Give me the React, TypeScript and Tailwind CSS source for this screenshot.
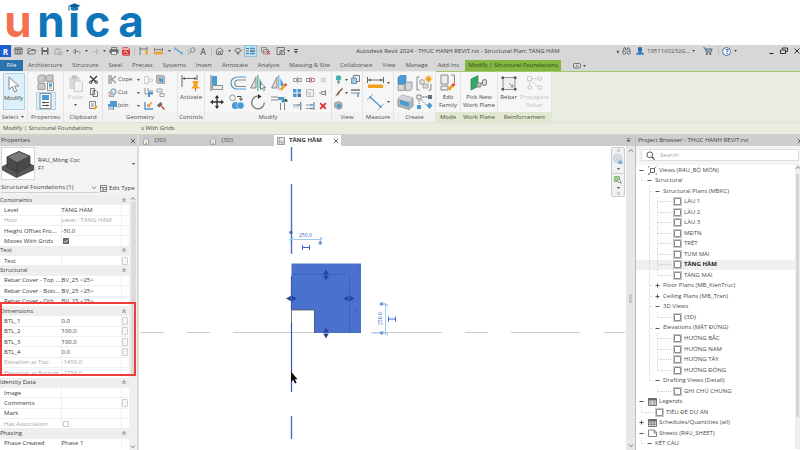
import React from 'react';

type IconProps = { w: number; h: number; children: React.ReactNode; className?: string };

const Icon = ({ w, h, children, className = '' }: IconProps) => (
  <svg width={w} height={h} viewBox={`0 0 ${w} ${h}`} fill="none" className={`block shrink-0 ${className}`} aria-hidden="true">
    {children}
  </svg>
);

const G = '#6a6a6a';
const B = '#4a9bd4';
const O = '#f2a21f';

const Caret = ({ className = '' }: { className?: string }) => (
  <Icon w={5} h={4} className={className}>
    <path d="M1 1h3L2.500 2.900z" fill="#4f4f4f" />
  </Icon>
);

/* ---------- Brand ---------- */

const Brand = () => (
  <header className="flex h-[45px] shrink-0 items-start bg-white pl-[2px]">
    <div className="flex text-center font-['Inter',sans-serif] text-[44px] leading-[42px] font-bold text-[#0e76b8]">
      <span className="w-[32px] text-[#f4704f]">u</span>
      <span className="w-[34px]">n</span>
      <span className="relative w-[11px]">
        i
        <span className="absolute top-0 left-1/2 flex h-[12px] w-[14px] -translate-x-1/2 items-end bg-white">
          <Icon w={14} h={8} className="overflow-visible">
            <path d="M1.500 1.800 7.500-.8 13.500 1.800 7.500 4.400z" fill="#0b5f9b" />
            <path d="M3.800 2.800v3c2.200 1.200 5.200 1.200 7.400 0v-3L7.500 4.400z" fill="#0e76b8" />
            <path d="M2 2v4.500" stroke="#0b5f9b" />
          </Icon>
        </span>
      </span>
      <span className="w-[37px]">c</span>
      <span className="w-[30px]">a</span>
    </div>
  </header>
);

/* ---------- Quick access toolbar ---------- */

type Tool = { name: string; w: string; icon: React.ReactNode; on?: boolean };

const arrow = (n: string, w: string): Tool => ({ name: n, w, icon: <Caret /> });

const tools: (Tool | 'sep')[] = [
  {
    name: 'Revit menu', w: 'w-[11px]',
    icon: (
      <span className="flex h-[12px] w-[11px] items-center justify-center bg-[#1b5fd0] text-[8px] font-bold text-white">R</span>
    ),
  },
  {
    name: 'Home', w: 'w-[14px]',
    icon: <Icon w={9} h={8}><path d="M1 1h7v6H1zM1 2.500h7M3.300 2.500V7M4.500 4.200h2.500M4.500 5.700h2.500" stroke="#5b6067" strokeWidth=".9" /></Icon>,
  },
  {
    name: 'Open', w: 'w-[14px]',
    icon: <Icon w={10} h={8}><path d="M1 7V1.500h2.500l1 1H7.500V3.500M1 7l2-3.500h6L7.500 7z" stroke="#666" strokeWidth=".8" /></Icon>,
  },
  {
    name: 'Save', w: 'w-[12px]',
    icon: <Icon w={8} h={8}><path d="M.5.500h7v7h-7z" fill="#63676c" /><path d="M2 .5h4v2.500H2z" fill="#e6e6e6" /><path d="M2 5h4v2.500H2z" fill="#d6d6d6" /></Icon>,
  },
  {
    name: 'Synchronize', w: 'w-[14px]',
    icon: <Icon w={9} h={8}><path d="M1 2.500h4v4.500H1zM2 2.500c0-2 5-2 5 0M5 5h3v2.500H5z" stroke="#a5a5a5" strokeWidth=".9" /></Icon>,
  },
  arrow('Synchronize options', 'w-[5px]'),
  { name: 'Undo', w: 'w-[13px]', icon: <Icon w={9} h={7}><path d="M1 3.500 3.500 1.200v4.600zM3.500 3.500H6c1 0 2 .5 2 2" stroke="#777" strokeWidth=".9" /></Icon> },
  arrow('Undo history', 'w-[6px]'),
  { name: 'Redo', w: 'w-[12px]', icon: <Icon w={9} h={7}><path d="M8 3.500 5.500 1.200v4.600zM5.500 3.500H3c-1 0-2 .5-2 2" stroke="#b2b2b2" strokeWidth=".9" /></Icon> },
  arrow('Redo history', 'w-[6px]'),
  {
    name: 'Print', w: 'w-[13px]',
    icon: <Icon w={10} h={8}><path d="M2.500.500h5v2h-5z" stroke="#666" strokeWidth=".8" /><path d="M.5 2.500h9v3.800h-9z" fill="#666a6f" /><path d="M2.500 4.500h5v3h-5z" fill="#eee" stroke="#666" strokeWidth=".7" /></Icon>,
  },
  {
    name: 'Export PDF', w: 'w-[12px]',
    icon: <Icon w={8} h={9}><path d="M1 .5h5l1.500 1.500v6.500H1z" fill="#f1b4b4" stroke="#b33" strokeWidth=".6" /><path d="M0 3h8v4.500H0z" fill="#d93636" /><path d="M1.500 5.500 4 4l1.500 2.500" stroke="#fff" strokeWidth=".7" /></Icon>,
  },
  'sep',
  { name: 'Measure', w: 'w-[14px]', icon: <Icon w={9} h={8}><path d="M1 0v8M8 0v3M1 2h7" stroke={G} strokeWidth=".9" /><path d="M6.500 3.500h2.500v4H6.500z" fill={O} /></Icon> },
  { name: 'Aligned ruler', w: 'w-[17px]', icon: <Icon w={9} h={7}><path d="M.5 0v3M8.500 0v3M.5 1.500h8" stroke={G} strokeWidth=".8" /><path d="M0 3.500h9v3H0z" fill="#e6a63c" /></Icon> },
  arrow('Measure options', 'w-[5px]'),
  { name: 'Aligned dimension', w: 'w-[13px]', icon: <Icon w={9} h={8}><path d="M1 1.500l7 5" stroke={B} strokeWidth="1.200" /><path d="M0 3l2-3M7 8l2-3" stroke={B} strokeWidth=".8" /></Icon> },
  { name: 'Tag by category', w: 'w-[12px]', icon: <Icon w={9} h={8}><circle cx="5.800" cy="3" r="2.300" stroke="#777" strokeWidth=".8" /><path d="M4.200 4.800 1 7.200M.5 3.500l1.500-1" stroke="#777" strokeWidth=".8" /></Icon> },
  { name: 'Text', w: 'w-[12px]', icon: <span className="text-[9px] text-[#444]">A</span> },
  'sep',
  { name: 'Default 3D view', w: 'w-[13px]', icon: <Icon w={9} h={8}><path d="M.5 4 4.500.7 8.500 4M1.700 3.500v4h5.600v-4M3.700 7.500V4.700h1.800v2.800" stroke={G} strokeWidth=".9" /></Icon> },
  arrow('3D view options', 'w-[6px]'),
  { name: 'Section', w: 'w-[12px]', icon: <Icon w={8} h={8}><circle cx="4" cy="3.500" r="2.300" stroke={G} strokeWidth=".9" /><path d="M0 3.500h1.500M6.500 3.500H8M3 6l1 1.700L5 6z" stroke={G} strokeWidth=".8" /></Icon> },
  { name: 'Thin lines', w: 'w-[13px]', on: true, icon: <Icon w={9} h={8}><path d="M0 1.500h3M0 4h3M0 6.500h3" stroke="#444" strokeWidth=".7" /><path d="M4 1.500h5M4 6.500h5" stroke="#3f93cf" strokeWidth="1.400" /><path d="M4 4h5" stroke="#333" /></Icon> },
  { name: 'Close inactive views', w: 'w-[17px]', icon: <Icon w={10} h={8}><path d="M.5.500h5v4.500h-5zM2.500 2.500h5v4.500h-5z" stroke="#888" strokeWidth=".9" /><path d="M6 4l2.800 3.500M8.800 4 6 7.500" stroke="#d33" /></Icon> },
  { name: 'Switch windows', w: 'w-[12px]', icon: <Icon w={9} h={8}><path d="M1 7.500V.5h7.500v3H4v4z" stroke={G} strokeWidth=".9" /><path d="M5 5h3.500v2.500H5z" stroke={G} strokeWidth=".9" /></Icon> },
  arrow('Window list', 'w-[5px]'),
  { name: 'Customize toolbar', w: 'w-[10px]', icon: <Icon w={6} h={5}><path d="M1 .5h4" stroke="#444" /><path d="M1 2h4L3 4.500z" fill="#444" /></Icon> },
];

const TitleBar = () => (
  <div className="flex h-[15px] shrink-0 items-center bg-[#d7d7d7] pb-[3px]">
    {tools.map((t, i) =>
      t === 'sep' ? (
        <span key={i} className="flex w-[4px] shrink-0 justify-center"><span className="h-[9px] w-px bg-[#bdbdbd]" /></span>
      ) : (
        <button
          key={i}
          aria-label={t.name}
          className={`flex h-[12px] shrink-0 items-center justify-center ${t.w} ${t.on ? 'bg-[#c2e0f3] outline outline-[#8fc3e6] -outline-offset-1' : ''}`}
        >
          {t.icon}
        </button>
      ),
    )}
    <h1 className="min-w-0 flex-1 truncate text-center text-[#3d3d3d]">
      Autodesk Revit 2024 - THUC HANH REVIT.rvt - Structural Plan: TẦNG HẦM
    </h1>
    <div className="flex w-[185px] shrink-0 items-center">
      <button aria-label="Collapse search" className="w-[7px]"><Icon w={4} h={5}><path d="M3.500 1v3.500L1.500 2.700z" fill="#333" /></Icon></button>
      <button aria-label="Search" className="w-[14px]">
        <Icon w={9} h={8}>
          <path d="M2 .8h1.500v2M5.500 2.800v-2H7M2 1 .800 5M7 1l1.200 4M3.500 2.800h2" stroke={G} strokeWidth=".9" />
          <circle cx="2.200" cy="5.700" r="1.600" stroke={G} strokeWidth=".9" /><circle cx="6.800" cy="5.700" r="1.600" stroke={G} strokeWidth=".9" />
        </Icon>
      </button>
      <button className="flex items-center text-[#555]">
        <Icon w={8} h={8} className="mr-[3px]"><path d="M2 .3h4v3.500L5 5H3L2 3.800z" fill="#2c66b8" /><path d="M.3 7.800V6L3 5h2l2.700 1v1.800z" fill="#3b7bd0" /></Icon>
        1951160232G...
        <Caret className="ml-[1px]" />
      </button>
      <button aria-label="App store" className="ml-[5px] flex w-[14px] justify-center">
        <Icon w={10} h={8}><path d="M.3.800h1.500l1.500 4.400h4.500L9.300 2H2.300" stroke="#4c5a6e" strokeWidth=".9" /><path d="M3 2.800h5.500M3.300 3.900h5" stroke="#4c7ec0" strokeWidth=".7" /><circle cx="3.800" cy="6.900" r=".9" fill="#444" /><circle cx="7.300" cy="6.900" r=".9" fill="#444" /></Icon>
      </button>
      <span className="mx-[3px] h-[10px] w-px bg-[#c2c2c2]" />
      <button aria-label="Help" className="flex items-center gap-[2px]">
        <span className="flex size-[9px] items-center justify-center rounded-full border border-[#3f6fae] bg-white text-[7px] leading-none font-bold text-[#2c66b8]">?</span>
        <Caret />
      </button>
      <span className="ml-auto flex items-center gap-[5px]">
        <button aria-label="Minimize"><Icon w={7} h={8}><path d="M1.500 6.500h4" stroke="#333" strokeWidth="1.200" /></Icon></button>
        <button aria-label="Restore"><Icon w={8} h={8}><path d="M2.500 2V1h5v3.500H6M.5 3h5v3.500h-5z" stroke="#333" /></Icon></button>
        <button aria-label="Close"><Icon w={7} h={8}><path d="M1.500 1.500l5 5M6.500 1.500l-5 5" stroke="#333" /></Icon></button>
      </span>
    </div>
  </div>
);

/* ---------- Ribbon tabs ---------- */

const tabs = [
  'Architecture', 'Structure', 'Steel', 'Precast', 'Systems', 'Insert', 'Annotate', 'Analyze',
  'Massing & Site', 'Collaborate', 'View', 'Manage', 'Add-Ins',
];

const TabBar = () => (
  <nav className="flex h-[11px] shrink-0 items-stretch bg-[#d7d7d7] text-[#505050]">
    <button className="w-[23px] bg-[#2b73ae] text-white">File</button>
    <div className="ml-[5px] flex gap-[10px]">
      {tabs.map((t) => (
        <button key={t} className="whitespace-nowrap">{t}</button>
      ))}
    </div>
    <button className="ml-[6px] w-[96px] bg-[#84b740] whitespace-nowrap text-[#33431d]">Modify | Structural Foundations</button>
    <button aria-label="Ribbon display" className="ml-[12px] flex items-center gap-[1px]">
      <Icon w={8} h={6}><rect x=".5" y=".5" width="7" height="4.500" rx="1" stroke={G} strokeWidth=".9" /><path d="M2.800 3.500h2.400L4 1.800z" fill={G} /></Icon>
      <Caret />
    </button>
  </nav>
);

/* ---------- Ribbon ---------- */

const Panel = ({ title, w, children, green = false, drop = false }: {
  title: string; w: string; children: React.ReactNode; green?: boolean; drop?: boolean;
}) => (
  <section className={`flex shrink-0 flex-col border-r border-[#e4e4e4] ${w} ${green ? 'border-t border-t-[#a3c66c]' : 'border-t border-t-[#ececec]'}`}>
    <div className="flex h-[40px] justify-center bg-[#f6f6f6] pt-px">{children}</div>
    <h2 className={`flex h-[10px] items-center justify-center gap-[2px] whitespace-nowrap text-[#4f4f4f] ${green ? 'bg-[#e0e8d0]' : 'bg-[#f2f2f2]'}`}>
      {title}
      {drop && <Caret />}
    </h2>
  </section>
);

const Small = ({ name, children }: { name: string; children: React.ReactNode }) => (
  <button aria-label={name} className="flex h-[13px] items-center justify-center">{children}</button>
);

const Big = ({ children, label, faded = false, className = '' }: {
  children: React.ReactNode; label: React.ReactNode; faded?: boolean; className?: string;
}) => (
  <button className={`flex flex-col items-center leading-[8px] ${faded ? 'text-[#c6c6c6]' : 'text-[#4a4a4a]'} ${className}`}>
    <span className="flex h-[20px] items-center">{children}</span>
    {label}
  </button>
);

const modifyBig: [string, React.ReactNode][] = [
  ['Align', <Icon w={14} h={16}><path d="M1 0v16" stroke={G} /><path d="M2 1h5v9H2z" fill={B} /><path d="M2.500 10.500h10v4h-10z" fill="#eee" stroke="#8b8f94" /></Icon>],
  ['Offset', <Icon w={17} h={16}><path d="M17 2H8a6 6 0 0 0 0 12h9" stroke={B} strokeWidth="1.200" /><path d="M17 5H9a3 3 0 0 0 0 6.500h8" stroke="#8a8a8a" strokeWidth="1.200" /></Icon>],
  ['Mirror', <Icon w={16} h={16}><path d="M6 2v11H.7z" fill="#ddd" stroke="#888" /><path d="M9.500 3v10h4.500z" fill={B} /><path d="M7.800 0v16" stroke="#4cba72" strokeWidth="1.200" /><path d="M10.500 8v6.500l1.700-1.500 1.500 2.500 1-.6-1.200-2.400h2z" fill="#fff" stroke="#555" strokeWidth=".7" /></Icon>],
  ['Mirror by axis', <Icon w={17} h={16}><path d="M6 2v11H.7z" fill="#ddd" stroke="#888" /><path d="M9.500 3v8h4z" fill={B} /><path d="M7.800 0v15" stroke="#5fa7d8" /><path d="M9.500 14.800l5-5" stroke={O} strokeWidth="2.600" /><path d="M14 10.300l1.500-1.500" stroke="#e5533c" strokeWidth="2.600" /></Icon>],
  ['Move', <Icon w={14} h={14}><path d="M7 1v12M1 7h12" stroke="#333" strokeWidth="1.400" /><path d="M7 0l2.200 3H4.800zM7 14l2.200-3H4.800zM0 7l3-2.200v4.400zM14 7l-3-2.200v4.400z" fill="#333" /></Icon>],
  ['Copy', <Icon w={16} h={16}><circle cx="3.500" cy="3.800" r="2.800" stroke="#999" /><path d="M8 2.500h4v3.500M10.500 4.500L12 6.500l1.500-2" stroke="#444" /><circle cx="6.500" cy="11.500" r="3.600" fill={B} /><circle cx="11.500" cy="11.500" r="3.600" fill={B} stroke="#fff" strokeWidth=".5" /></Icon>],
  ['Rotate', <Icon w={16} h={16}><path d="M9 2.300A6.300 6.300 0 1 0 14.300 8.500" stroke="#777" strokeWidth="1.300" /><path d="M8 0l3.500 2.500L8 5z" fill="#333" /></Icon>],
  ['Trim', <Icon w={17} h={16}><path d="M0 3h7M0 6h7" stroke="#888" /><path d="M7 4.500h5v4" stroke={B} strokeWidth="3" /><path d="M9.500 16V9M13.500 16V9" stroke="#888" /><path d="M12.500 7.500l2.500-3 2 3z" fill="#333" /></Icon>],
];

const modifySmall: [string, React.ReactNode][] = [
  ['Split', <Icon w={9} h={6}><path d="M.5 1.500h3v3h-3zM5.500 1.500h3v3h-3z" stroke="#888" strokeWidth=".8" /><path d="M4.500 0v6" stroke="#d66" strokeWidth=".8" /></Icon>],
  ['Split with gap', <Icon w={9} h={6}><path d="M.5 1.500h3v3h-3zM5.500 1.500h3v3h-3z" stroke="#777" strokeWidth=".8" /><path d="M4 0v6M5 0v6" stroke="#d55" strokeWidth=".6" /></Icon>],
  ['Unpin', <Icon w={8} h={8}><path d="M1 4h2M3 2v4M3 2.500h3v3H3M6 1v6" stroke="#ccc" /></Icon>],
  ['Array', <Icon w={8} h={8}><path d="M0 0h3.500v3.500H0zM4.500 0H8v3.500H4.500zM0 4.500h3.500V8H0z" fill={B} /><path d="M4.500 4.500H8V8H4.500z" fill="#5c7486" /></Icon>],
  ['Scale', <Icon w={8} h={8}><path d="M.5.500h7v7h-7z" fill="#eee" stroke="#bbb" /><path d="M.5 4h3.500v3.500" stroke="#bbb" /></Icon>],
  ['Pin', <Icon w={8} h={8}><path d="M0 4h3M3 2v4M3 2.500h3v3H3M6.500 1v6" stroke="#888" strokeWidth=".9" /></Icon>],
  ['Trim single', <Icon w={9} h={8}><path d="M0 3h4" stroke="#888" /><path d="M4 3h3" stroke={B} strokeWidth="1.400" /><path d="M7.800 0v8" stroke="#666" /><path d="M0 5h6" stroke="#aaa" strokeWidth=".7" /></Icon>],
  ['Trim multiple', <Icon w={9} h={8}><path d="M0 3h5M0 6.500h5" stroke="#999" strokeWidth="1.200" /><path d="M4 3h3M4 6.500h3" stroke={B} strokeWidth="1.400" /><path d="M8 0v8" stroke="#666" /></Icon>],
  ['Delete', <Icon w={8} h={8}><path d="M1.200 1.200l5.600 5.600M6.800 1.200 1.200 6.800" stroke="#e02c2c" strokeWidth="1.700" /></Icon>],
];

const Ribbon = () => (
  <div className="flex h-[51px] shrink-0 items-stretch bg-[#e9eddf]">
    <Panel title="Select" w="w-[28px]" drop>
      <Big label="Modify" className="h-[37px] w-[22px] border border-[#a9d3ec] bg-[#dceffa]">
        <Icon w={12} h={17}><path d="M1 1v12.500l3.300-2.800L6.600 16l2.200-1-2.300-5h4.300z" fill="#fff" stroke="#888" /></Icon>
      </Big>
    </Panel>
    <Panel title="Properties" w="w-[36px]">
      <div className="flex flex-col items-center gap-px">
        <button aria-label="Family types" className="flex h-[18px] items-center">
          <Icon w={18} h={17}>
            <path d="M1 2.500 2.500 1H8v6L7 8H1zM9 2.500 10.500 1H16v6H9zM1 9.500h7v6H1z" fill="#c9cbce" stroke="#8c9095" strokeWidth=".8" />
            <path d="M10.500 8h6v8.500h-6z" fill="#fff" stroke="#777" strokeWidth=".8" /><path d="M12 9.500h3v3h-3z" fill={B} /><path d="M12 14h3" stroke="#777" strokeWidth=".8" />
          </Icon>
        </button>
        <button aria-label="Properties palette" className="flex h-[18px] w-[20px] items-center justify-center border border-[#a9d3ec] bg-[#dceffa]">
          <Icon w={13} h={16}>
            <path d="M1 .5h11v15H1z" fill="#fff" stroke="#888" /><path d="M3 2h7v5H3z" fill={B} /><path d="M3 9.500h7M3 12.500h7M5 8.500v2M8 11.500v2" stroke="#555" />
          </Icon>
        </button>
      </div>
    </Panel>
    <Panel title="Clipboard" w="w-[39px]">
      <Big label={<>Paste<Caret className="mt-[2px]" /></>} faded className="mr-[6px]">
        <Icon w={14} h={17}><path d="M.5 2h10v12H.5z" fill="#d8d8d8" /><path d="M3 .5h5v3H3z" fill="#bdbdbd" /><path d="M5.500 6h6l2 2v8.500h-8z" fill="#f4f4f4" stroke="#c8c8c8" /></Icon>
      </Big>
      <div className="flex flex-col">
        <Small name="Cut"><Icon w={9} h={9}><path d="M1 1l5.500 5.500M8 1 2.500 6.500" stroke="#333" strokeWidth="1.300" /><circle cx="1.800" cy="7.200" r="1.200" stroke="#333" /><circle cx="7.200" cy="7.200" r="1.200" stroke="#333" /></Icon></Small>
        <Small name="Copy to clipboard"><Icon w={8} h={9}><path d="M.5.500h4v6h-4zM3 2.500h3l1.500 1.500v4.500H3z" fill="#f6f6f6" stroke={G} strokeWidth=".9" /></Icon></Small>
        <Small name="Match type"><Icon w={9} h={9}><path d="M.5.500h6v7h-6zM2 3h3M2 5h3" stroke="#777" strokeWidth=".9" /><path d="M5 8l3-3" stroke={O} strokeWidth="2" /></Icon></Small>
      </div>
    </Panel>
    <Panel title="Geometry" w="w-[75px]">
      <div className="grid w-full grid-cols-[12px_16px_8px_12px_13px] content-start pl-[3px] text-left text-[#4a4a4a]">
        <Small name="Cope icon"><Icon w={9} h={9}><path d="M1 0v9M3 0v9M8 1 4 4.500 8 8" stroke="#8b8f94" strokeWidth="1.200" /></Icon></Small>
        <button className="text-left">Cope</button>
        <Small name="Cope options"><Caret /></Small>
        <Small name="Notch"><Icon w={9} h={8}><path d="M.5.500h4v7h-4zM4.500 3H8.500v2.500h-4" stroke="#ccc" /></Icon></Small>
        <Small name="Split face"><Icon w={9} h={9}><path d="M.5.500h7l1 1v7h-7l-1-1z" fill="#b9bcc0" stroke="#888" strokeWidth=".6" /><path d="M3 3l4 1v3.500L3 6z" fill={B} /></Icon></Small>
        <Small name="Cut geometry"><Icon w={9} h={9}><path d="M1 4h5v4.500H1z" fill="#ddd" stroke="#999" strokeWidth=".8" /><circle cx="5.500" cy="3.500" r="2.700" stroke="#7a90a3" fill="#cfe4f2" /><path d="M3.500 6l-2 2" stroke="#e77" /></Icon></Small>
        <button className="text-left">Cut</button>
        <Small name="Cut options"><Caret /></Small>
        <Small name="Wall joins"><Icon w={9} h={9}><path d="M1 0v6h8M4 0v3h5" stroke="#888" strokeWidth=".9" /><path d="M4 4h5v2H6v3H4z" fill={B} /></Icon></Small>
        <Small name="Beam joins"><Icon w={9} h={9}><path d="M1 1h5v3H1zM4 5.500h4v3H4z" stroke="#999" strokeWidth=".9" /></Icon></Small>
        <Small name="Join geometry"><Icon w={9} h={9}><path d="M2 0h7v6H6v3H0V3h2z" fill={B} /><path d="M0 5.500h5V9H0z" fill="#c5c9cd" /></Icon></Small>
        <button className="text-left">Join</button>
        <Small name="Join options"><Caret /></Small>
        <Small name="Paint"><Icon w={9} h={9}><path d="M1 1v7h8" stroke={B} strokeWidth="1.400" /><path d="M3.500 6 7.500 1.500" stroke={O} strokeWidth="1.800" /><path d="M3 3l3 3" stroke="#e66" /></Icon></Small>
        <Small name="Demolish"><Icon w={9} h={9}><path d="M1 4.500 4.500 1l2 2L3 6.500z" fill="#666" /><path d="M4.500 4l4 4.500" stroke="#b5523a" strokeWidth="1.400" /></Icon></Small>
      </div>
    </Panel>
    <Panel title="Controls" w="w-[27px]">
      <Big label="Activate">
        <Icon w={19} h={16}><path d="M1 0v12M16 0v5M1.500 3.500h14" stroke={G} /><path d="M1 3.500l3-1.500v3zM16 3.500l-3-1.500v3z" fill={G} /><path d="M11.500 6h6v1.500l-1 .5v3l2 1.500v1h-8v-1l2-1.500V8l-1-.5z" fill={O} /><path d="M14.500 13v3" stroke="#a66" /></Icon>
      </Big>
    </Panel>
    <Panel title="Modify" w="w-[127px]">
      <div className="grid grid-cols-[20px_21px_21px_21px] grid-rows-[19px_19px] items-center justify-items-center">
        {modifyBig.map(([n, i]) => <button key={n} aria-label={n}>{i}</button>)}
      </div>
      <div className="ml-[1px] grid grid-cols-[13px_13px_13px] content-start">
        {modifySmall.map(([n, i]) => <Small key={n} name={n}>{i}</Small>)}
      </div>
    </Panel>
    <Panel title="View" w="w-[31px]">
      <div className="grid grid-cols-[10px_7px_11px] content-start">
        <Small name="Hide in view"><Icon w={7} h={9}><circle cx="3.500" cy="3" r="2.700" fill="#3fb5ad" /><path d="M2.500 6h2v2.500h-2z" fill="#777" /></Icon></Small>
        <Small name="Hide options"><Caret /></Small>
        <Small name="Displace"><Icon w={9} h={9}><path d="M2.500.500h6v6h-6z" stroke="#778" /><path d="M.5 3h5v5.500h-5z" fill="#9cc9e6" stroke="#5c86a3" strokeWidth=".8" /></Icon></Small>
        <Small name="Override graphics"><Icon w={9} h={9}><path d="M8.500.500 4 5" stroke="#8a5a30" strokeWidth="1.500" /><path d="M4.500 4 1 8.500 5.500 6z" fill="#555" /></Icon></Small>
        <Small name="Override options"><Caret /></Small>
        <Small name="Linework"><Icon w={9} h={8}><path d="M0 1h9" stroke="#777" strokeWidth="1.500" /><path d="M0 4h9" stroke="#888" /><path d="M7 4v4" stroke={B} strokeWidth="1.500" /></Icon></Small>
        <Small name="Selection box"><Icon w={9} h={9}><path d="M.5 2 4 .5l4 1.500v5L5 8.500l-4.500-2z" fill="#aeb2b6" stroke="#888" strokeWidth=".6" /><circle cx="5" cy="5" r="2" fill={B} /></Icon></Small>
      </div>
    </Panel>
    <Panel title="Measure" w="w-[31px]">
      <div className="grid grid-cols-[20px_6px] grid-rows-[19px_19px] items-center justify-items-center">
        <button aria-label="Measure between"><Icon w={17} h={12}><path d="M.5 0v6M16.500 0v6M1 3h15" stroke={G} /><path d="M1 3l3-1.500v3zM16 3l-3-1.500v3z" fill={G} /><path d="M1 7.500h15v3.500H1z" fill={O} /></Icon></button>
        <button aria-label="Measure options"><Caret /></button>
        <button aria-label="Dimension"><Icon w={17} h={16}><path d="M3 3l11 10" stroke={B} strokeWidth="1.300" /><path d="M0 6l6-6M11 16l6-6" stroke="#999" strokeWidth=".8" /><path d="M2 2l3 1-2 2zM15 14l-3-1 2-2z" fill={B} /></Icon></button>
        <button aria-label="Dimension options"><Caret /></button>
      </div>
    </Panel>
    <Panel title="Create" w="w-[42px]">
      <div className="grid grid-cols-[19px_19px] grid-rows-[19px_19px] items-center justify-items-center">
        <button aria-label="Create assembly"><Icon w={16} h={16}><path d="M1 2.500 3 .5h6v7L7.500 9H1z" fill={B} stroke="#33749f" strokeWidth=".6" /><path d="M1 9.500h6.500v6H1zM8.500 9l2-2H15v7l-1.500 1.500h-5z" fill="#d4d6d9" stroke="#8c9095" strokeWidth=".8" /></Icon></button>
        <button aria-label="Create group"><Icon w={17} h={16}><path d="M3.500 2H1v13h2.500M12.500 15H15V9" stroke="#888" /><circle cx="6" cy="7" r="2.500" fill="#ddd" stroke="#999" strokeWidth=".8" /><path d="M7 9h5v4H7z" fill="#ddd" stroke="#999" strokeWidth=".8" /><circle cx="12.500" cy="4" r="2.400" fill={O} /><path d="M12.500 0v8M8.500 4h8M9.800 1.300l5.400 5.400M15.200 1.300 9.800 6.700" stroke={O} strokeWidth=".9" /></Icon></button>
        <button aria-label="Create parts"><Icon w={17} h={16}><path d="M1 4.500 5 1l11 3v8l-4 3.500L1 12z" fill="#b4b8bc" stroke="#85898e" strokeWidth=".8" /><path d="M1 4.500 5 1l11 3-4 3.500z" fill="#d3d5d8" /><path d="M3 6l9 2.500V13L3 10.500z" fill={B} /></Icon></button>
        <button aria-label="Create similar"><Icon w={17} h={16}><path d="M1 1h4v4H1z" stroke="#777" strokeWidth=".9" /><path d="M6.500 3h5" stroke="#444" strokeDasharray="2 1" /><path d="M12 1h4v4h-4z" fill="#66707a" /><path d="M3 6v4M5 5.500l6 6" stroke="#777" strokeWidth=".9" strokeDasharray="2 1" /><path d="M1 11h4v4H1z" fill={B} /><path d="M13.500 8.500l3 3-3 3.500-3-3.500z" fill={B} /></Icon></button>
      </div>
    </Panel>
    <Panel title="Mode" w="w-[25px]" green>
      <Big label={<>Edit<br />Family</>}>
        <Icon w={18} h={18}><path d="M2 1h7v9H2zM12 1h3.500v8M2 12h7v4H2z" fill="#eee" stroke="#888" /><path d="M9.500 15.800l4.500-4.500" stroke={O} strokeWidth="2.800" /><path d="M13.500 11.800l2-2" stroke="#e5443c" strokeWidth="2.800" /></Icon>
      </Big>
    </Panel>
    <Panel title="Work Plane" w="w-[37px]" green>
      <Big label={<>Pick New<br />Work Plane</>}>
        <Icon w={18} h={18}><path d="M1 5l7-3.500v11L1 16z" fill="#34a864" stroke="#238450" strokeWidth=".7" /><circle cx="9" cy="11" r="2.300" fill="#bbb" stroke="#777" strokeWidth=".7" /><path d="M10 9.500l3-1" stroke="#777" /><rect x="12.500" y="5.500" width="4" height="6" rx="1.800" fill="#ddd" stroke="#777" /></Icon>
      </Big>
    </Panel>
    <Panel title="Reinforcement" w="w-[54px]" green>
      <Big label="Rebar" className="mr-[3px]">
        <Icon w={16} h={17}><path d="M2 2.500h12v12H2z" fill="#eee" stroke="#888" strokeWidth=".9" /><path d="M.5 1.500h2.500v2.500H.5zM13 1.500h2.500v2.500H13zM.5 13h2.500v2.500H.5zM13 13h2.500v2.500H13z" fill="#555" /><path d="M8 8l4 4M9.500 12H12V9.500" stroke="#777" strokeWidth=".8" /></Icon>
      </Big>
      <Big faded label={<>Propagate<br />Rebar</>}>
        <Icon w={17} h={16}><path d="M1.500 1.500h4v4h-4zM12 2h3.500v3H12zM2 11h3.500v3H2zM12 11h3.500v3H12z" stroke="#ccc" /><path d="M6 3.500h5M3.500 6v4M5.500 6l6 5" stroke="#ccc" /></Icon>
      </Big>
    </Panel>
    <div className="flex-1 border-t border-[#a3c66c]" />
  </div>
);

/* ---------- Properties palette ---------- */

type Row = { k: string; v?: string; dim?: boolean; btn?: boolean; check?: boolean; checked?: boolean };

const sections: { name: string; rows: Row[] }[] = [
  {
    name: 'Constraints',
    rows: [
      { k: 'Level', v: 'TẦNG HẦM' },
      { k: 'Host', v: 'Level : TẦNG HẦM', dim: true },
      { k: 'Height Offset Fro...', v: '-50.0' },
      { k: 'Moves With Grids', check: true, checked: true },
    ],
  },
  { name: 'Text', rows: [{ k: 'Text', btn: true }] },
  {
    name: 'Structural',
    rows: [
      { k: 'Rebar Cover - Top ...', v: 'BV_25 <25>' },
      { k: 'Rebar Cover - Bott...', v: 'BV_25 <25>' },
      { k: 'Rebar Cover - Oth...', v: 'BV_25 <25>' },
    ],
  },
  {
    name: 'Dimensions',
    rows: [
      { k: 'BTL_1', v: '0.0', btn: true },
      { k: 'BTL_2', v: '100.0', btn: true },
      { k: 'BTL_3', v: '100.0', btn: true },
      { k: 'BTL_4', v: '0.0', btn: true },
      { k: 'Elevation at Top', v: '-1450.0', dim: true },
      { k: 'Elevation at Bottom', v: '-2750.0', dim: true },
    ],
  },
  {
    name: 'Identity Data',
    rows: [
      { k: 'Image' },
      { k: 'Comments', btn: true },
      { k: 'Mark' },
      { k: 'Has Association', check: true, dim: true },
    ],
  },
  { name: 'Phasing', rows: [{ k: 'Phase Created', v: 'Phase 1' }] },
];

const ChevronUp = () => <Icon w={6} h={5}><path d="M1 3.800 3 1.500l2 2.300" stroke="#777" strokeWidth=".9" /></Icon>;
const ChevronDown = () => <Icon w={6} h={5}><path d="M1 1.500l2 2.300 2-2.300" stroke="#777" strokeWidth=".9" /></Icon>;
const Cross = () => <Icon w={6} h={6}><path d="M.8.800l4.400 4.400M5.200.800.800 5.200" stroke="#555" strokeWidth=".9" /></Icon>;

const Properties = () => (
  <aside className="flex w-[139px] shrink-0 flex-col border-r-2 border-[#dcdcdc] bg-[#f3f3f3] text-[#3c3c3c]">
    <div className="flex h-[11px] shrink-0 items-center justify-between bg-[#cfcfcf] pr-px pl-px">
      <h2>Properties</h2>
      <button aria-label="Close properties"><Cross /></button>
    </div>
    <div className="flex h-[35px] shrink-0 items-center pl-px">
      <span className="flex h-[33px] w-[34px] items-center justify-center border border-[#d5d5d5] bg-white">
        <Icon w={32} h={28}>
          <path d="M.5 16.500 15 9.500l16.500 6v4.500L14.500 27.500.5 20z" fill="#58585a" stroke="#2f2f2f" strokeWidth=".7" />
          <path d="M5 7 17 1.500l11 4.800v9.500L15 22.500 5 17z" fill="#4a4a4c" stroke="#2f2f2f" strokeWidth=".7" />
          <path d="M5 7 17 1.500l11 4.800L15 12.500z" fill="#7b7b7d" stroke="#3a3a3a" strokeWidth=".7" />
          <path d="M15 12.500v14.500" stroke="#333" strokeWidth=".7" />
        </Icon>
      </span>
      <div className="ml-[3px] flex-1 leading-[8px]">
        <p>R4U_Móng Cọc</p>
        <p>F1</p>
      </div>
      <button aria-label="Type selector" className="mr-px"><Caret /></button>
    </div>
    <div className="flex h-[14px] shrink-0 items-center pl-px">
      <button className="flex w-[98px] items-center justify-between border-b border-[#d0d0d0] pr-[2px] whitespace-nowrap">
        Structural Foundations (1)
        <ChevronDown />
      </button>
      <button className="ml-px flex items-center gap-[2px] whitespace-nowrap">
        <Icon w={7} h={7}><path d="M.5.500h6v6h-6zM.5 2.500h6M3 2.500v4M3 4.500h3.500" stroke="#666" strokeWidth=".8" /></Icon>
        Edit Type
      </button>
    </div>
    <div className="flex min-h-0 flex-1 bg-white">
      <div className="relative min-w-0 flex-1 pb-[2px]">
        <table className="h-full w-full table-fixed border-collapse text-left leading-[8px]">
          <colgroup><col className="w-[61px]" /><col /><col className="w-[8px]" /></colgroup>
          {sections.map((s) => (
            <tbody key={s.name}>
              <tr className="bg-[#eeeeee]">
                <th colSpan={2} scope="rowgroup" className="p-0 font-normal">{s.name}</th>
                <td className="p-0"><button aria-label={`Collapse ${s.name}`} className="block"><Icon w={6} h={6}><path d="M1.500 3 3 1.500 4.500 3M1.500 4.800 3 3.300l1.500 1.500" stroke="#555" strokeWidth=".8" /></Icon></button></td>
              </tr>
              {s.rows.map((r) => (
                <tr key={r.k} className={`border-t border-[#f0f0f0] ${r.dim ? 'text-[#a6a6a6]' : ''}`}>
                  <th scope="row" className="overflow-hidden py-0 pr-0 pl-[4px] font-normal whitespace-nowrap">{r.k}</th>
                  <td className="border-x border-[#f0f0f0] p-0 whitespace-nowrap">
                    {r.check ? (
                      <span className="relative ml-px block size-[6px]">
                        <input
                          type="checkbox"
                          aria-label={r.k}
                          defaultChecked={r.checked}
                          disabled={r.dim}
                          className="peer block size-[6px] appearance-none border border-[#666] checked:bg-[#666] disabled:border-[#ccc]"
                        />
                        <span className="pointer-events-none absolute inset-0 hidden peer-checked:block">
                          <Icon w={6} h={6}><path d="M1.300 3l1.300 1.300 2.200-2.600" stroke="#fff" strokeWidth=".9" /></Icon>
                        </span>
                      </span>
                    ) : r.v}
                  </td>
                  <td className="p-0">{r.btn && <button aria-label={`Associate ${r.k}`} className="block h-[8px] w-[6px] rounded-[1px] border border-[#cfcfcf] bg-[#f7f7f7]" />}</td>
                </tr>
              ))}
            </tbody>
          ))}
        </table>
        <div className="pointer-events-none absolute top-[107px] left-0 h-[74px] w-[136px] border-2 border-[#f23b3b]" />
      </div>
      <div className="flex w-[8px] shrink-0 flex-col items-center justify-between bg-[#efefef] py-px">
        <ChevronUp />
        <span className="mb-[70px] w-[5px] flex-1 bg-[#dcdcdc]" />
        <ChevronDown />
      </div>
    </div>
  </aside>
);

/* ---------- Drawing area ---------- */

const HouseIcon = () => (
  <Icon w={8} h={8}><path d="M.5 4 4 .8 7.500 4M1.500 3.500v4h5v-4" fill="#eee" stroke="#999" strokeWidth=".8" /><path d="M3.500 5h1.500v2.500H3.500z" fill="#d9a866" /></Icon>
);

const Handle = ({ x, y, r = 0 }: { x: number; y: number; r?: number }) => (
  <g transform={`translate(${x} ${y}) rotate(${r})`} fill="#24479b"><path d="M-2.800-.6h5.600L0-5.500zM-2.800.6h5.600L0 5.500z" /></g>
);

const Canvas = () => (
  <main className="flex min-w-0 flex-1 flex-col">
    <div className="flex h-[11px] shrink-0 items-stretch bg-[#cbcbcb] text-[#555]">
      <button className="flex w-[67px] items-center gap-[4px] pl-[3px]"><HouseIcon />{'{3D}'}</button>
      <button className="flex w-[68px] items-center gap-[4px] pl-[3px]"><HouseIcon />{'{3D}'}</button>
      <div className="flex w-[67px] items-center bg-white pr-[2px] pl-[3px] font-bold text-[#333]">
        <button className="flex flex-1 items-center gap-[4px]">
          <Icon w={8} h={8}><path d="M.5.500h7v7h-7z" fill="#e4e4e4" stroke="#888" strokeWidth=".8" /><path d="M2.500.500v7M.5 5h7M5 5v2.500" stroke="#999" strokeWidth=".7" /></Icon>
          TẦNG HẦM
        </button>
        <button aria-label="Close view"><Cross /></button>
      </div>
      <button aria-label="View list" className="mr-[4px] ml-auto flex items-center"><Icon w={5} h={5}><path d="M.5.500h4M1 2h3L2.500 4z" fill="#555" stroke="#555" strokeWidth=".5" /></Icon></button>
    </div>
    <div className="flex min-h-0 flex-1">
      <div className="relative min-w-0 flex-1 overflow-hidden bg-white">
        <svg width="486" height="304" viewBox="139 146 486 304" className="block" fill="none">
          <path d="M140 332.500h24M187 332.500h23M233 332.500h81M372 332.500h70M465 332.500h23M511 332.500h69M604 332.500h21" stroke="#cacaca" />
          <path d="M291.500 147v14M291.500 184v70M291.500 416v23" stroke="#4a6fca" strokeWidth="1.400" />
          <path d="M291.500 263.500h69.500v69.500h-47v-23h-22.500z" fill="#4a72cd" />
          <path d="M291.500 310h23v23M291.500 310v13" stroke="#555" strokeWidth=".8" />
          <path d="M291.500 276v34M291.500 323v69" stroke="#3558b8" strokeWidth="1.200" />
          <path d="M291.500 274.500h55M349.500 275v58" stroke="#3a60bd" strokeWidth=".8" />
          <path d="M358 266l3 3M354 309.500l3 2" stroke="#2f55b0" strokeWidth=".8" />
          <Handle x={326} y={275} /><Handle x={326} y={333} />
          <Handle x={291.500} y={298.500} r={90} /><Handle x={349} y={298.500} r={90} />
          <path d="M289 239.500h33M289.500 242l4-5M319 242l4-5M320.500 237v6" stroke="#9cc4ee" strokeWidth=".9" />
          <circle cx="291" cy="232.500" r="1.800" fill="#4f78b8" /><circle cx="320.300" cy="243" r="1.800" fill="#6f97cc" />
          <text x="299" y="237" className="fill-[#3a62c8] text-[5px]">250.0</text>
          <path d="M302.500 245v5M309.500 245v5M303 247.500h6" stroke="#3a62c8" />
          <path d="M385.500 303v32M380 304.500h8M371 333h17M383 302l5 5M383 331l5 5" stroke="#9cc4ee" strokeWidth=".9" />
          <circle cx="381.500" cy="304" r="1.800" fill="#6f97cc" /><circle cx="381.500" cy="333" r="1.800" fill="#6f97cc" />
          <text transform="translate(382 325) rotate(-90)" className="fill-[#3a62c8] text-[5px]">250.0</text>
          <path d="M388.500 316.500v5M395.500 316.500v5M389 319h6" stroke="#3a62c8" />
          <path d="M291 371.500v10.500l2.200-2 1.800 3.500 1.600-.8-1.700-3.400h2.600z" fill="#111" />
        </svg>
        <div className="absolute top-px right-px flex h-[50px] w-[14px] flex-col items-center justify-between rounded-[2px] border border-[#c9c9c9] bg-[#f1f1f1] py-px">
          <span className="size-[3px] rounded-full border border-[#aaa]" />
          <button aria-label="Steering wheel"><Icon w={10} h={11}><circle cx="4.500" cy="4.500" r="3.800" fill="#e6edf2" stroke="#9fb0bd" strokeWidth=".8" /><circle cx="4.500" cy="4.500" r="1.500" stroke="#9fb0bd" strokeWidth=".7" /><path d="M5 6.500h4.500V10H5z" fill="#85b6dc" /></Icon></button>
          <Caret />
          <span className="h-px w-full bg-[#cfcfcf]" />
          <button aria-label="Zoom region"><Icon w={8} h={8}><path d="M.5.500h5v5h-5z" fill="#9ccf85" stroke="#78a865" strokeWidth=".7" /><circle cx="5" cy="5" r="1.500" fill="#fff" stroke="#777" strokeWidth=".7" /><path d="M6 6l1.700 1.700" stroke="#777" /></Icon></button>
          <Caret />
          <span className="size-[3px] rounded-full border border-[#aaa]" />
        </div>
      </div>
      <div className="flex w-[9px] shrink-0 flex-col items-center justify-between bg-[#e7e7e7] py-[2px]">
        <ChevronUp />
        <span className="h-[9px] w-[3px] bg-[#c8c8c8]" />
        <ChevronDown />
      </div>
    </div>
  </main>
);

/* ---------- Project browser ---------- */

type Cell = ' ' | '|' | '-' | '+' | 'L' | 'T';
type Node = { c: Cell[]; t: string; icon?: 'views' | 'legend' | 'table' | 'sheet' | 'leaf'; on?: boolean };

const leaf = (t: string, last = false, on = false, mid: Cell = '|'): Node => ({ c: [' ', mid, last ? 'L' : 'T'], t, icon: 'leaf', on });

const nodes: Node[] = [
  { c: ['-'], t: 'Views (R4U_BỘ MÔN)', icon: 'views' },
  { c: ['L', '-'], t: 'Structural' },
  { c: [' ', 'T', '-'], t: 'Structural Plans (MBKC)' },
  leaf('LẦU 1'), leaf('LẦU 2'), leaf('LẦU 3'), leaf('MĐTN'), leaf('TRỆT'), leaf('TUM MÁI'),
  leaf('TẦNG HẦM', false, true), leaf('TẦNG MÁI', true),
  { c: [' ', 'T', '+'], t: 'Floor Plans (MB_KienTruc)' },
  { c: [' ', 'T', '+'], t: 'Ceiling Plans (MB_Tran)' },
  { c: [' ', 'T', '-'], t: '3D Views' },
  leaf('{3D}', true),
  { c: [' ', 'T', '-'], t: 'Elevations (MẶT ĐỨNG)' },
  leaf('HƯỚNG BẮC'), leaf('HƯỚNG NAM'), leaf('HƯỚNG TÂY'), leaf('HƯỚNG ĐÔNG', true),
  { c: [' ', 'L', '-'], t: 'Drafting Views (Detail)' },
  leaf('GHI CHÚ CHUNG', true, false, ' '),
  { c: ['-'], t: 'Legends', icon: 'legend' },
  { c: ['L'], t: 'TIÊU ĐỀ DỰ ÁN', icon: 'leaf' },
  { c: ['+'], t: 'Schedules/Quantities (all)', icon: 'table' },
  { c: ['-'], t: 'Sheets (R4U_SHEET)', icon: 'sheet' },
  { c: ['L', '-'], t: 'KẾT CẤU' },
];

const TreeCell = ({ c }: { c: Cell }) => (
  <Icon w={8} h={11}>
    {(c === '|' || c === 'T') && <path d="M4.500 0v11" stroke="#c4c4c4" strokeWidth=".7" strokeDasharray="1 1" />}
    {c === 'L' && <path d="M4.500 0v5.500" stroke="#c4c4c4" strokeWidth=".7" strokeDasharray="1 1" />}
    {(c === 'L' || c === 'T') && <path d="M4.500 5.500H8" stroke="#c4c4c4" strokeWidth=".7" strokeDasharray="1 1" />}
    {(c === '-' || c === '+') && <path d="M2.500 5.500h4" stroke="#555" />}
    {c === '+' && <path d="M4.500 3.500v4" stroke="#555" />}
  </Icon>
);

const nodeIcons = {
  views: <Icon w={9} h={9}><path d="M2.500 2.500h4v4h-4z" stroke="#666" /><path d="M0 2V0h2M9 7v2H7M2 9H0V7M6 3l2.500-2.500M.5 8.500 3 6" stroke="#666" strokeWidth=".8" /></Icon>,
  legend: <Icon w={9} h={8}><path d="M.5.500h8v7h-8z" fill="#ddd" stroke="#555" strokeWidth=".8" /><path d="M.5.500h8v2h-8z" fill="#666" /><path d="M1.500 4h2M1.500 6h2M5 4h2.500M5 6h2.500" stroke="#666" strokeWidth=".8" /></Icon>,
  table: <Icon w={9} h={8}><path d="M.5.500h8v7h-8zM.5 3h8M.5 5.200h8M3.200.500v7M6 .5v7" stroke="#666" strokeWidth=".9" /><path d="M.5.500h8V2h-8z" fill="#666" /></Icon>,
  sheet: <Icon w={9} h={8}><path d="M.5 1h6l2 2.500v4h-8zM6 1v3h2.500" stroke="#666" strokeWidth=".8" /></Icon>,
  leaf: <Icon w={9} h={9}><path d="M1.500 1.500h6v6h-6z" fill="#fff" stroke="#8c8c8c" /><path d="M.5.500h8v8h-8z" stroke="#909090" strokeDasharray="1 1" /></Icon>,
};

const TreeRow = ({ n }: { n: Node }) => {
  const isDeepLeaf = n.icon === 'leaf' && n.c.length === 3;
  return (
    <li className={`flex min-h-0 flex-1 items-center overflow-hidden pl-px whitespace-nowrap ${n.on ? 'bg-[#f0f0f0] font-bold text-[#222]' : ''}`}>
      {n.c.map((c, i) => <TreeCell key={i} c={c} />)}
      {n.icon === 'leaf' && (
        <span className={`mr-[2px] border-t border-dotted border-[#cacaca] ${isDeepLeaf ? 'w-[10px]' : 'w-[8px]'}`} />
      )}
      {n.icon && n.icon !== 'leaf' && <span className="w-[3px]" />}
      {n.icon && nodeIcons[n.icon]}
      <button className="ml-[2px]">{n.t}</button>
    </li>
  );
};

const Browser = () => (
  <aside className="flex w-[165px] shrink-0 flex-col border-l border-[#bdbdbd] bg-[#f5f5f5] text-[#4a4a4a]">
    <div className="flex h-[11px] shrink-0 items-center justify-between bg-[#cfcfcf] pl-[2px] text-[#3c3c3c]">
      <h2 className="whitespace-nowrap">Project Browser - THUC HANH REVIT.rvt</h2>
      <button aria-label="Close browser" className="w-[3px] overflow-hidden"><Cross /></button>
    </div>
    <label className="mt-[3px] mr-px ml-[5px] flex h-[12px] shrink-0 items-center gap-[5px] border border-[#dedede] bg-white pl-[4px]">
      <Icon w={9} h={9}><circle cx="3.800" cy="3.800" r="2.900" stroke="#555" /><path d="M6 6l2.500 2.500" stroke="#555" strokeWidth="1.200" /></Icon>
      <input type="search" placeholder="Search" aria-label="Search" className="h-[10px] min-w-0 flex-1 outline-none placeholder:text-[#9fa6ac]" />
    </label>
    <div className="mt-[4px] flex min-h-0 flex-1 bg-white pb-px">
      <ul className="flex min-w-0 flex-1 flex-col">
        {nodes.map((n, i) => <TreeRow key={i} n={n} />)}
      </ul>
      <div className="flex w-[5px] shrink-0 flex-col items-center overflow-hidden bg-[#eeeeee]">
        <ChevronUp />
        <span className="mt-[4px] mb-[32px] w-[3px] flex-1 bg-[#d6d6d6]" />
      </div>
    </div>
  </aside>
);

export default function App() {
  return (
    <div className="flex h-screen flex-col overflow-hidden bg-white font-['Open_Sans','Noto_Sans',sans-serif] text-[6px] leading-[9px]">
      <Brand />
      <TitleBar />
      <TabBar />
      <Ribbon />
      <div className="flex h-[13px] shrink-0 items-center border-t border-b border-t-[#e0e2da] border-b-[#cfd2c8] bg-[#e9eddf] pl-[3px] text-[#4a4a4a]">
        <span className="w-[138px]">Modify | Structural Foundations</span>
        <span>s With Grids</span>
      </div>
      <div className="flex min-h-0 flex-1">
        <Properties />
        <Canvas />
        <Browser />
      </div>
    </div>
  );
}
